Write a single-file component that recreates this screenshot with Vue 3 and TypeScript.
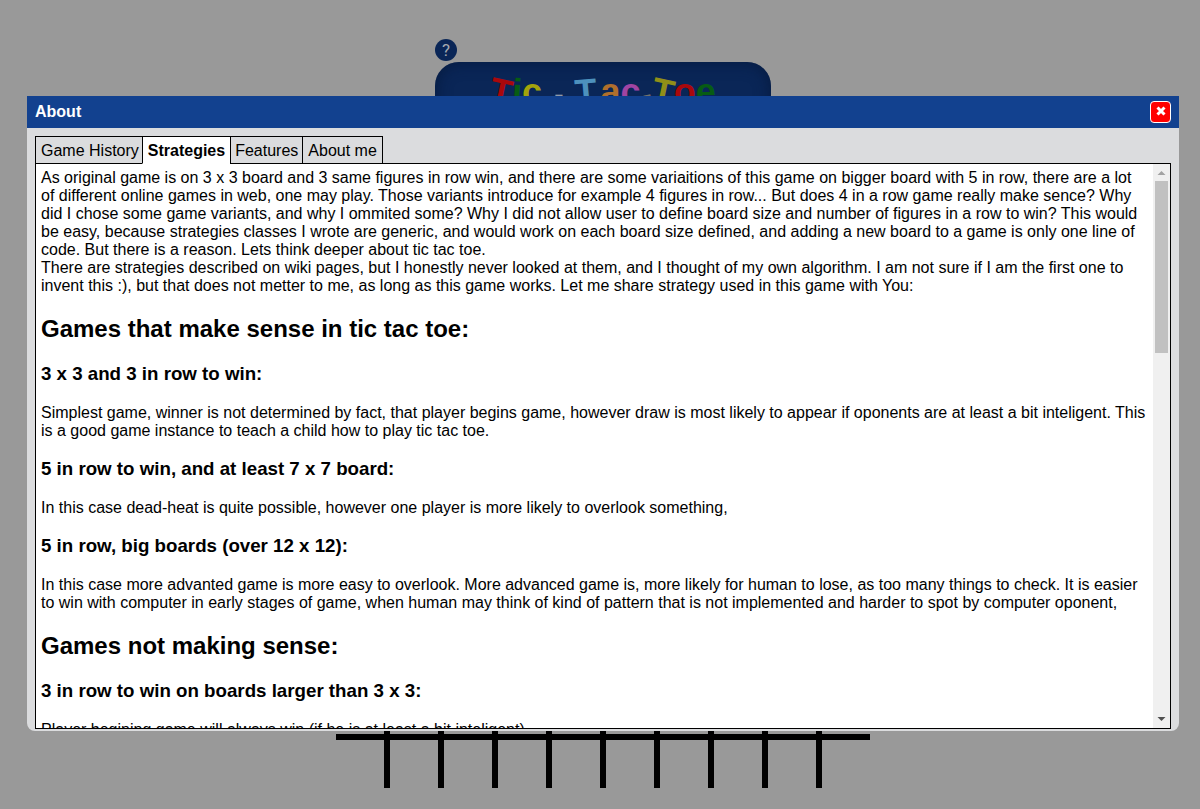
<script setup lang="ts">
import { ref } from 'vue'

interface Letter {
  char: string
  tone: string
}

const title: Letter[] = [
  { char: 'T', tone: 'red tilt-right' },
  { char: 'i', tone: 'green tilt-slight' },
  { char: 'c', tone: 'yellow' },
  { char: '-', tone: 'white dash spaced' },
  { char: 'T', tone: 'sky tilt-left' },
  { char: 'a', tone: 'orange' },
  { char: 'c', tone: 'violet' },
  { char: '-', tone: 'grey dash tilt-dash' },
  { char: 'T', tone: 'olive tilt-right' },
  { char: 'o', tone: 'red' },
  { char: 'e', tone: 'green' },
]

const tabs = ['Game History', 'Strategies', 'Features', 'About me']
const activeTab = ref('Strategies')
</script>

<template>
  <div class="page">
    <div class="game">
      <div class="top">
        <button class="help" type="button" aria-label="Help">?</button>
        <div class="banner">
          <h1 class="logo">
            <span v-for="(l, i) in title" :key="i" :class="['letter', l.tone]">{{ l.char }}</span>
          </h1>
        </div>
      </div>
      <div class="board">
        <div v-for="n in 100" :key="n" class="cell"></div>
      </div>
    </div>

    <div class="overlay">
      <section class="dialog" role="dialog" aria-labelledby="dialog-title">
        <header class="dialog-head">
          <span id="dialog-title">About</span>
          <button class="close" type="button" aria-label="Close">
            <svg viewBox="0 0 10 10" width="10" height="10">
              <path d="M1.5 1.5L8.5 8.5M8.5 1.5L1.5 8.5" stroke="#fff" stroke-width="3" />
            </svg>
          </button>
        </header>
        <div class="dialog-body">
          <nav class="tabs" role="tablist">
            <button
              v-for="t in tabs"
              :key="t"
              type="button"
              role="tab"
              :aria-selected="t === activeTab"
              :class="['tab', { active: t === activeTab }]"
              @click="activeTab = t"
            >{{ t }}</button>
          </nav>
          <div class="panel">
            <article class="content">
              <p>As original game is on 3 x 3 board and 3 same figures in row win, and there are some variaitions of this game on bigger board with 5 in row, there are a lot of different online games in web, one may play. Those variants introduce for example 4 figures in row... But does 4 in a row game really make sence? Why did I chose some game variants, and why I ommited some? Why I did not allow user to define board size and number of figures in a row to win? This would be easy, because strategies classes I wrote are generic, and would work on each board size defined, and adding a new board to a game is only one line of code. But there is a reason. Lets think deeper about tic tac toe.</p>
              <p>There are strategies described on wiki pages, but I honestly never looked at them, and I thought of my own algorithm. I am not sure if I am the first one to invent this :), but that does not metter to me, as long as this game works. Let me share strategy used in this game with You:</p>
              <h2>Games that make sense in tic tac toe:</h2>
              <h3>3 x 3 and 3 in row to win:</h3>
              <p>Simplest game, winner is not determined by fact, that player begins game, however draw is most likely to appear if oponents are at least a bit inteligent. This is a good game instance to teach a child how to play tic tac toe.</p>
              <h3>5 in row to win, and at least 7 x 7 board:</h3>
              <p>In this case dead-heat is quite possible, however one player is more likely to overlook something,</p>
              <h3>5 in row, big boards (over 12 x 12):</h3>
              <p>In this case more advanted game is more easy to overlook. More advanced game is, more likely for human to lose, as too many things to check. It is easier to win with computer in early stages of game, when human may think of kind of pattern that is not implemented and harder to spot by computer oponent,</p>
              <h2>Games not making sense:</h2>
              <h3>3 in row to win on boards larger than 3 x 3:</h3>
              <p>Player begining game will always win (if he is at least a bit inteligent)</p>
            </article>
            <div class="scrollbar" aria-hidden="true">
              <svg class="arrow" viewBox="0 0 17 17"><path d="M4.5 11L8.5 7L12.5 11Z" fill="#a3a3a3" /></svg>
              <div class="track"><div class="thumb"></div></div>
              <svg class="arrow" viewBox="0 0 17 17"><path d="M4.5 6L8.5 10L12.5 6Z" fill="#505050" /></svg>
            </div>
          </div>
        </div>
      </section>
    </div>
  </div>
</template>

<style>
body {
  margin: 0;
  background: #999;
}
</style>

<style scoped>
.page {
  position: relative;
  min-height: 100vh;
  box-sizing: border-box;
  padding: 39px 21px 21px 27px;
  overflow: hidden;
  background: #999;
  color: #000;
  font: 16px/18px "Liberation Sans", Arial, sans-serif;
}
.game {
  display: flex;
  flex-direction: column;
  align-items: center;
}
.top {
  width: 336px;
  height: 215px;
}
.help {
  display: block;
  width: 22px;
  height: 22px;
  margin-bottom: 1px;
  padding: 0;
  border: 0;
  border-radius: 50%;
  background: #0a2657;
  color: #a5a9b0;
  font: 17px/22px Roboto, "Liberation Sans", sans-serif;
}
.banner {
  height: 120px;
  border-radius: 24px;
  background: #0a2657;
  box-shadow: inset 0 0 16px #061a3e;
}
.logo {
  display: flex;
  align-items: baseline;
  justify-content: center;
  margin: 0;
  padding-top: 12px;
  font-size: 36px;
  line-height: 36px;
}
.letter {
  display: inline-block;
}
.dash {
  margin: 0 1px;
  font-size: 28px;
}
.spaced { margin: 0 12px; }
.tilt-right { transform: rotate(12deg); }
.tilt-slight { transform: rotate(4deg); }
.tilt-left {
  margin-right: 3px;
  transform: rotate(-5deg);
}
.tilt-dash { transform: rotate(-12deg); }
.red { color: #a9080c; }
.green { color: #075c14; }
.yellow { color: #a3a30c; }
.olive { color: #918f18; }
.white { color: #929ba8; }
.sky { color: #4d91bd; }
.orange { color: #b06f2c; }
.violet { color: #a044a3; }
.grey { color: #72706a; }
.board {
  display: grid;
  grid-template-columns: repeat(10, 48px);
  grid-auto-rows: 48px;
  gap: 6px;
  background: #000;
}
.cell { background: #999; }
.overlay {
  position: absolute;
  inset: 0;
  box-sizing: border-box;
  padding: 96px 21px 78px 27px;
}
.dialog {
  display: flex;
  flex-direction: column;
  height: 100%;
  overflow: hidden;
  border-radius: 0 0 8px 8px;
  background: #dbdcde;
}
.dialog-head {
  display: flex;
  align-items: center;
  justify-content: space-between;
  height: 32px;
  flex: none;
  box-sizing: border-box;
  padding: 0 8px;
  background: #12418f;
  color: #fff;
  font-weight: bold;
}
.close {
  display: flex;
  align-items: center;
  justify-content: center;
  box-sizing: border-box;
  width: 21px;
  height: 22px;
  padding: 0 0 2px;
  border: 1px solid #fff;
  border-radius: 4px;
  background: #f00;
}
.dialog-body {
  display: flex;
  flex: 1;
  flex-direction: column;
  min-height: 0;
  padding: 8px 8px 2px;
}
.tabs {
  display: flex;
  z-index: 1;
  margin-bottom: -1px;
}
.tab {
  box-sizing: border-box;
  height: 28px;
  padding: 2px 4px 0;
  border: 1px solid #000;
  border-right-width: 0;
  background: #dbdcde;
  color: #000;
  font: 16px/24px "Liberation Sans", Arial, sans-serif;
}
.tab:first-child { padding: 2px 3px 0 5px; }
.tab:last-child {
  padding: 2px 5px 0;
  border-right-width: 1px;
}
.tab.active {
  padding: 2px 5px 0;
  border-bottom-color: #fff;
  background: #fff;
  font-weight: bold;
}
.panel {
  display: flex;
  flex: 1;
  min-height: 0;
  border: 1px solid #000;
  background: #fff;
}
.content {
  flex: 1;
  min-width: 0;
  padding: 5px;
  overflow-y: auto;
  scrollbar-width: none;
}
p { margin: 0; }
h2 {
  margin: 20px 0;
  font-size: 24px;
  line-height: 28px;
}
h3 {
  margin: 18px 0 19px;
  line-height: 22px;
}
.scrollbar {
  display: flex;
  flex-direction: column;
  width: 17px;
  flex: none;
  background: #f0f0f0;
}
.arrow {
  width: 17px;
  height: 17px;
}
.track {
  flex: 1;
  padding: 0 2px;
}
.thumb {
  height: 32.5%;
  background: #c1c1c1;
}
</style>
